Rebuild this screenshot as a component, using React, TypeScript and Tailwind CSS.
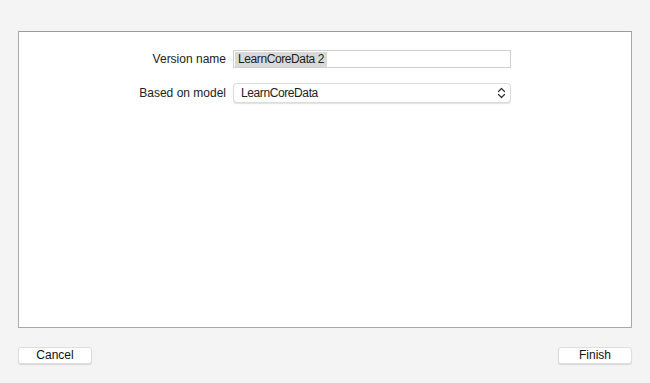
import React from "react";

export default function App() {
  return (
    <div
      className="w-[650px] h-[383px] bg-[#f4f4f4] flex flex-col text-[12px] text-[#222]"
      style={{ fontFamily: '"Liberation Sans", Arial, sans-serif' }}
    >
      <div className="ml-[18px] mt-[31px] w-[614px] h-[297px] bg-white border border-[#a9a9a9] border-t-[#9c9c9c]">
        <div className="pt-[18px] grid grid-cols-[208px_278px] gap-x-[6px] gap-y-[15px] items-center">
          <div className="text-right leading-[18px] pr-[1px]">Version name</div>
          <div className="h-[18px] border border-[#cfcfcf] bg-white flex items-center pl-[1px]">
            <span className="bg-[#d9d9d9] px-[3px] leading-[15px] tracking-[-0.4px]">LearnCoreData 2</span>
          </div>
          <div className="text-right leading-[20px] pr-[1px]">Based on model</div>
          <div className="h-[20px] rounded-[4px] border border-[#dcdcdc] bg-white shadow-[0_1px_1px_rgba(0,0,0,0.12)] flex items-center justify-between pl-[7px] pr-[4px]">
            <span className="tracking-[-0.4px]">LearnCoreData</span>
            <svg width="9" height="12" viewBox="0 0 9 12" fill="none" stroke="#333" strokeWidth="1.2" strokeLinecap="round" strokeLinejoin="round">
              <path d="M1.5 4.5 L4.5 1.5 L7.5 4.5" />
              <path d="M1.5 7.5 L4.5 10.5 L7.5 7.5" />
            </svg>
          </div>
        </div>
      </div>
      <div className="mt-[19px] mx-[18px] flex justify-between">
        <button className="w-[74px] h-[17px] bg-white rounded-[3px] border border-[#dedede] shadow-[0_1px_1px_rgba(0,0,0,0.12)] text-[12px] leading-[15px] text-[#111]">
          Cancel
        </button>
        <button className="w-[74px] h-[17px] bg-white rounded-[3px] border border-[#dedede] shadow-[0_1px_1px_rgba(0,0,0,0.12)] text-[12px] leading-[15px] text-[#111]">
          Finish
        </button>
      </div>
    </div>
  );
}
